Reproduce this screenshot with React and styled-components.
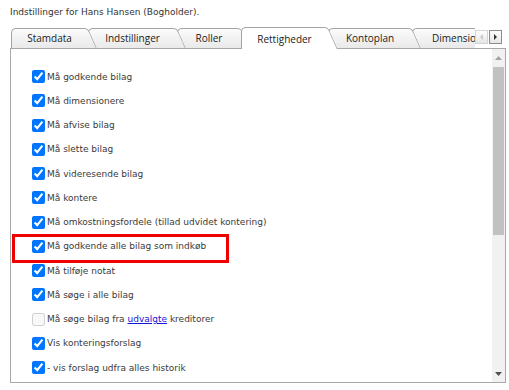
import React from 'react';
import styled, { createGlobalStyle } from 'styled-components';

const GlobalStyle = createGlobalStyle`
  html, body { margin: 0; padding: 0; background: #fff; }
  body { font-family: "DejaVu Sans", Verdana, sans-serif; }
`;

const Page = styled.div`
  width: 509px;
  height: 390px;
  box-sizing: border-box;
  padding: 6px 3px 0 10px;
  display: flex;
  flex-direction: column;
`;

const Title = styled.div`
  font-size: 9px;
  line-height: 12px;
  color: #333;
  margin-bottom: 9px;
`;

const TabBar = styled.div`
  display: flex;
  height: 22px;
  margin-bottom: -1px;
  position: relative;
  z-index: 1;
`;

const TabViewport = styled.div`
  flex: 1;
  display: flex;
  align-items: flex-start;
  overflow: hidden;
  padding-left: 1px;
`;

const Tab = styled.div`
  position: relative;
  flex: none;
  box-sizing: border-box;
  width: ${(p) => p.$w + 9}px;
  margin-right: -9px;
  margin-top: ${(p) => (p.$active ? 0 : 1)}px;
  height: ${(p) => (p.$active ? 22 : 20)}px;
  z-index: ${(p) => p.$z};
  display: flex;
  align-items: center;
  justify-content: center;
  padding-right: 9px;
  padding-top: ${(p) => (p.$active ? 1 : 0)}px;
  font-family: "Open Sans", sans-serif;
  font-size: 10px;
  color: #222;
  white-space: nowrap;

  &::before,
  &::after {
    content: "";
    position: absolute;
    top: 0;
    bottom: 0;
    z-index: -1;
    box-sizing: border-box;
    border-top: 1px solid #a4a4a4;
    background: ${(p) =>
      p.$active ? '#fff' : 'linear-gradient(#fbfbfb, #e9e9e9)'};
  }
  &::before {
    left: 0;
    right: 20px;
    border-left: 1px solid #a4a4a4;
    border-top-left-radius: 5px;
  }
  &::after {
    right: 9px;
    width: 24px;
    border-right: 1px solid #a4a4a4;
    border-top-right-radius: 4px;
    transform: skewX(24deg);
    transform-origin: top left;
  }
`;

const TabScroll = styled.div`
  display: flex;
  gap: 1px;
  padding-top: 3px;
  margin-right: 4px;
`;

const ScrollBtn = styled.div`
  width: 13px;
  height: 14px;
  box-sizing: border-box;
  border: 1px solid ${(p) => (p.$enabled ? '#8d8d8d' : '#d4d4d4')};
  background: linear-gradient(#fdfdfd, #e6e6e6);
  display: flex;
  align-items: center;
  justify-content: center;
`;

const Panel = styled.div`
  height: 335px;
  box-sizing: border-box;
  border: 1px solid #a8a8a8;
  background: #fff;
  display: flex;
`;

const List = styled.div`
  flex: 1;
  overflow: hidden;
  padding: 15.4px 0 0 21px;
`;

const Row = styled.label`
  position: relative;
  display: flex;
  align-items: center;
  height: 24.25px;
  font-size: 9px;
  color: #3a3a3a;
  white-space: nowrap;

  ${(p) =>
    p.$highlight &&
    `
    &::after {
      content: "";
      position: absolute;
      left: -20px;
      top: 0;
      width: 217px;
      height: 29px;
      box-sizing: border-box;
      border: 3px solid #ee0000;
      pointer-events: none;
    }
  `}
`;

const Check = styled.input`
  width: 13px;
  height: 13px;
  margin: 0 2px 0 0;
  flex: none;
`;

const Link = styled.a`
  color: #1515d8;
  text-decoration: underline;
`;

const Scrollbar = styled.div`
  width: 13px;
  flex: none;
  background: #f1f1f1;
  display: flex;
  flex-direction: column;
`;

const ScrollArrow = styled.div`
  height: 17px;
  flex: none;
  display: flex;
  align-items: center;
  justify-content: center;
`;

const Track = styled.div`
  flex: 1;
  display: flex;
  flex-direction: column;
  padding: 1px 1px 0;
`;

const Thumb = styled.div`
  height: 168px;
  background: #c1c1c1;
`;

const Tri = ({ dir, color, w = 7, h = 4 }) => (
  <svg width={w} height={h} viewBox={`0 0 ${w} ${h}`}>
    {dir === 'up' && <polygon points={`0,${h} ${w},${h} ${w / 2},0`} fill={color} />}
    {dir === 'down' && <polygon points={`0,0 ${w},0 ${w / 2},${h}`} fill={color} />}
    {dir === 'left' && <polygon points={`${w},0 ${w},${h} 0,${h / 2}`} fill={color} />}
    {dir === 'right' && <polygon points={`0,0 0,${h} ${w},${h / 2}`} fill={color} />}
  </svg>
);

const tabs = [
  { label: 'Stamdata', w: 77, z: 6 },
  { label: 'Indstillinger', w: 89, z: 5 },
  { label: 'Roller', w: 64, z: 4 },
  { label: 'Rettigheder', w: 87, z: 10, active: true },
  { label: 'Kontoplan', w: 84, z: 2 },
  { label: 'Dimensioner', w: 100, z: 1 },
];

const items = [
  { text: 'Må godkende bilag', checked: true },
  { text: 'Må dimensionere', checked: true },
  { text: 'Må afvise bilag', checked: true },
  { text: 'Må slette bilag', checked: true },
  { text: 'Må videresende bilag', checked: true },
  { text: 'Må kontere', checked: true },
  { text: 'Må omkostningsfordele (tillad udvidet kontering)', checked: true },
  { text: 'Må godkende alle bilag som indkøb', checked: true, highlight: true },
  { text: 'Må tilføje notat', checked: true },
  { text: 'Må søge i alle bilag', checked: true },
  {
    text: (
      <>
        Må søge bilag fra&nbsp;<Link href="#">udvalgte</Link>&nbsp;kreditorer
      </>
    ),
    checked: false,
    disabled: true,
  },
  { text: 'Vis konteringsforslag', checked: true },
  { text: '- vis forslag udfra alles historik', checked: true },
];

export default function App() {
  return (
    <>
      <GlobalStyle />
      <Page>
        <Title>Indstillinger for Hans Hansen (Bogholder).</Title>
        <TabBar>
          <TabViewport>
            {tabs.map((t) => (
              <Tab key={t.label} $w={t.w} $z={t.z} $active={t.active}>
                {t.label}
              </Tab>
            ))}
          </TabViewport>
          <TabScroll>
            <ScrollBtn>
              <Tri dir="left" color="#c8c8c8" w={3} h={6} />
            </ScrollBtn>
            <ScrollBtn $enabled>
              <Tri dir="right" color="#333" w={3} h={6} />
            </ScrollBtn>
          </TabScroll>
        </TabBar>
        <Panel>
          <List>
            {items.map((it, i) => (
              <Row key={i} $highlight={it.highlight}>
                <Check
                  type="checkbox"
                  defaultChecked={it.checked}
                  disabled={it.disabled}
                />
                {it.text}
              </Row>
            ))}
          </List>
          <Scrollbar>
            <ScrollArrow>
              <Tri dir="up" color="#a3a3a3" />
            </ScrollArrow>
            <Track>
              <Thumb />
            </Track>
            <ScrollArrow>
              <Tri dir="down" color="#505050" />
            </ScrollArrow>
          </Scrollbar>
        </Panel>
      </Page>
    </>
  );
}
